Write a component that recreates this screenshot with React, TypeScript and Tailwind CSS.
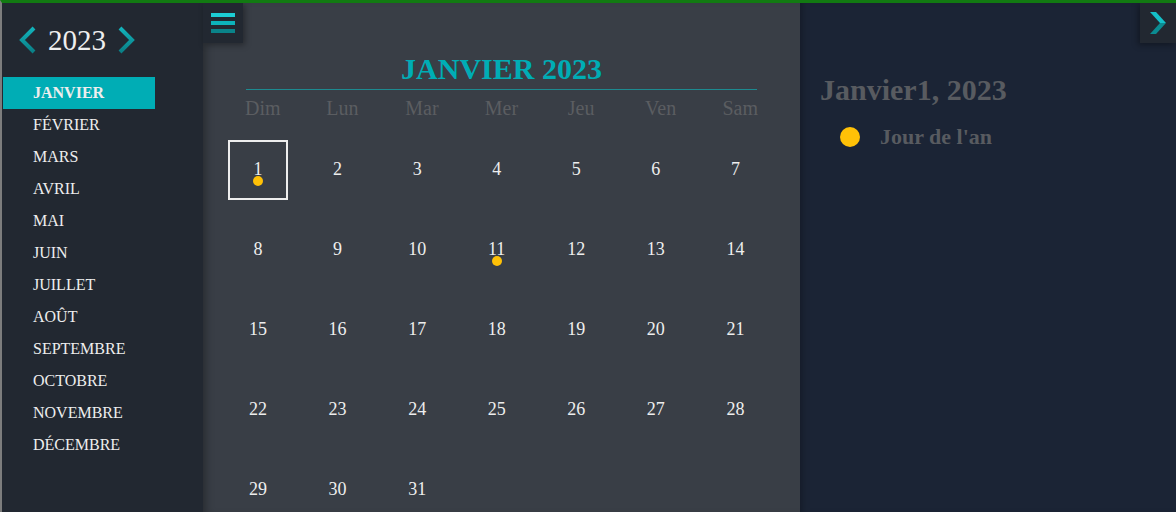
import React from "react";

const months = [
  "JANVIER",
  "FÉVRIER",
  "MARS",
  "AVRIL",
  "MAI",
  "JUIN",
  "JUILLET",
  "AOÛT",
  "SEPTEMBRE",
  "OCTOBRE",
  "NOVEMBRE",
  "DÉCEMBRE",
];

const weekDays = ["Dim", "Lun", "Mar", "Mer", "Jeu", "Ven", "Sam"];

const days = Array.from({ length: 31 }, (_, i) => i + 1);
const eventDays = [1, 11];

const Chevron = ({ dir }: { dir: "left" | "right" }) => (
  <svg width="20" height="28" viewBox="0 0 20 28">
    <defs>
      <linearGradient id={`yg-${dir}`} x1="0" y1="0" x2="0" y2="1">
        <stop offset="0" stopColor="#12b3bb" />
        <stop offset="1" stopColor="#0a7f86" />
      </linearGradient>
    </defs>
    <polyline
      points={dir === "left" ? "16,2 4,14 16,26" : "4,2 16,14 4,26"}
      fill="none"
      stroke={`url(#yg-${dir})`}
      strokeWidth="4"
    />
  </svg>
);

const App: React.FC = () => {
  return (
    <div className="h-[512px] w-full overflow-hidden border-t-[3px] border-l-2 border-t-[#127a12] border-l-[#7d7d7d] flex font-['Liberation_Serif',serif]">
      {/* sidebar */}
      <aside className="w-[201px] shrink-0 bg-[#222831] pl-px">
        <div className="flex items-center h-[74px] pl-[15px] gap-[10px]">
          <Chevron dir="left" />
          <span className="text-[29px] text-[#eeeeee] leading-none">2023</span>
          <Chevron dir="right" />
        </div>
        <ul>
          {months.map((m, i) => (
            <li
              key={m}
              className={`h-[32px] w-[152px] pl-[30px] flex items-center text-[16px] text-[#eeeeee] ${
                i === 0 ? "bg-[#00adb5] font-bold" : ""
              }`}
            >
              {m}
            </li>
          ))}
        </ul>
      </aside>

      {/* calendar */}
      <main className="relative w-[597px] shrink-0 bg-[#393e46] shadow-[inset_8px_0_10px_-6px_rgba(0,0,0,0.35)]">
        <button className="absolute left-0 top-0 w-[40px] h-[40px] bg-[#222831] shadow-[2px_2px_6px_rgba(0,0,0,0.35)] flex flex-col items-center justify-center gap-[4px]">
          <span className="block w-[24px] h-[4px] bg-[#1ccdd5]" />
          <span className="block w-[24px] h-[4px] bg-[#0db3bb]" />
          <span className="block w-[24px] h-[4px] bg-[#0a8389]" />
        </button>
        <div className="px-[43px] pt-[49px]">
          <h1 className="text-center text-[30px] font-bold text-[#00adb5] leading-[34px] border-b border-[#1d8a90] pb-[3px]">
            JANVIER 2023
          </h1>
        </div>
        <div className="px-[20px]">
          <div className="grid grid-cols-7 h-[22px] mt-[7px]">
            {weekDays.map((d) => (
              <div key={d} className="text-center text-[20px] leading-[22px] text-[#5b5d61]">
                {d}
              </div>
            ))}
          </div>
          <div className="grid grid-cols-7 mt-[21px] gap-y-[20px]">
            {days.map((d) => (
              <div key={d} className="h-[60px]">
                <div
                  className={`relative ml-[5px] w-[60px] h-[60px] flex justify-center pt-[19px] ${
                    d === 1 ? "border-2 border-[#eeeeee]" : ""
                  }`}
                >
                  <span className={`text-[18px] leading-[20px] text-[#eeeeee] ${d === 1 ? "-mt-[2px]" : ""}`}>{d}</span>
                  {eventDays.includes(d) && (
                    <span
                      className={`absolute left-1/2 -translate-x-1/2 w-[10px] h-[10px] rounded-full bg-[#ffc107] ${
                        d === 1 ? "top-[34px]" : "top-[36px]"
                      }`}
                    />
                  )}
                </div>
              </div>
            ))}
          </div>
        </div>
      </main>

      {/* events */}
      <section className="relative flex-1 bg-[#1b2435] shadow-[inset_6px_0_8px_-6px_rgba(0,0,0,0.4)] pl-[20px] pt-[69px]">
        <button className="absolute right-0 top-0 w-[36px] h-[40px] bg-[#222831] shadow-[-2px_2px_6px_rgba(0,0,0,0.35)] flex items-center justify-center">
          <svg width="16" height="22" viewBox="0 0 16 22">
            <polygon points="0,0 6,0 16,11 10,11" fill="#14c0c8" />
            <polygon points="10,11 16,11 6,22 0,22" fill="#0b8b91" />
          </svg>
        </button>
        <h2 className="text-[30px] font-bold text-[#585b60] leading-[36px]">Janvier1, 2023</h2>
        <div className="flex items-center mt-[12px] pl-[20px] gap-[20px]">
          <span className="w-[20px] h-[20px] rounded-full bg-[#ffc107]" />
          <span className="text-[22px] font-bold text-[#585b60]">Jour de l'an</span>
        </div>
      </section>
    </div>
  );
};

export default App;
